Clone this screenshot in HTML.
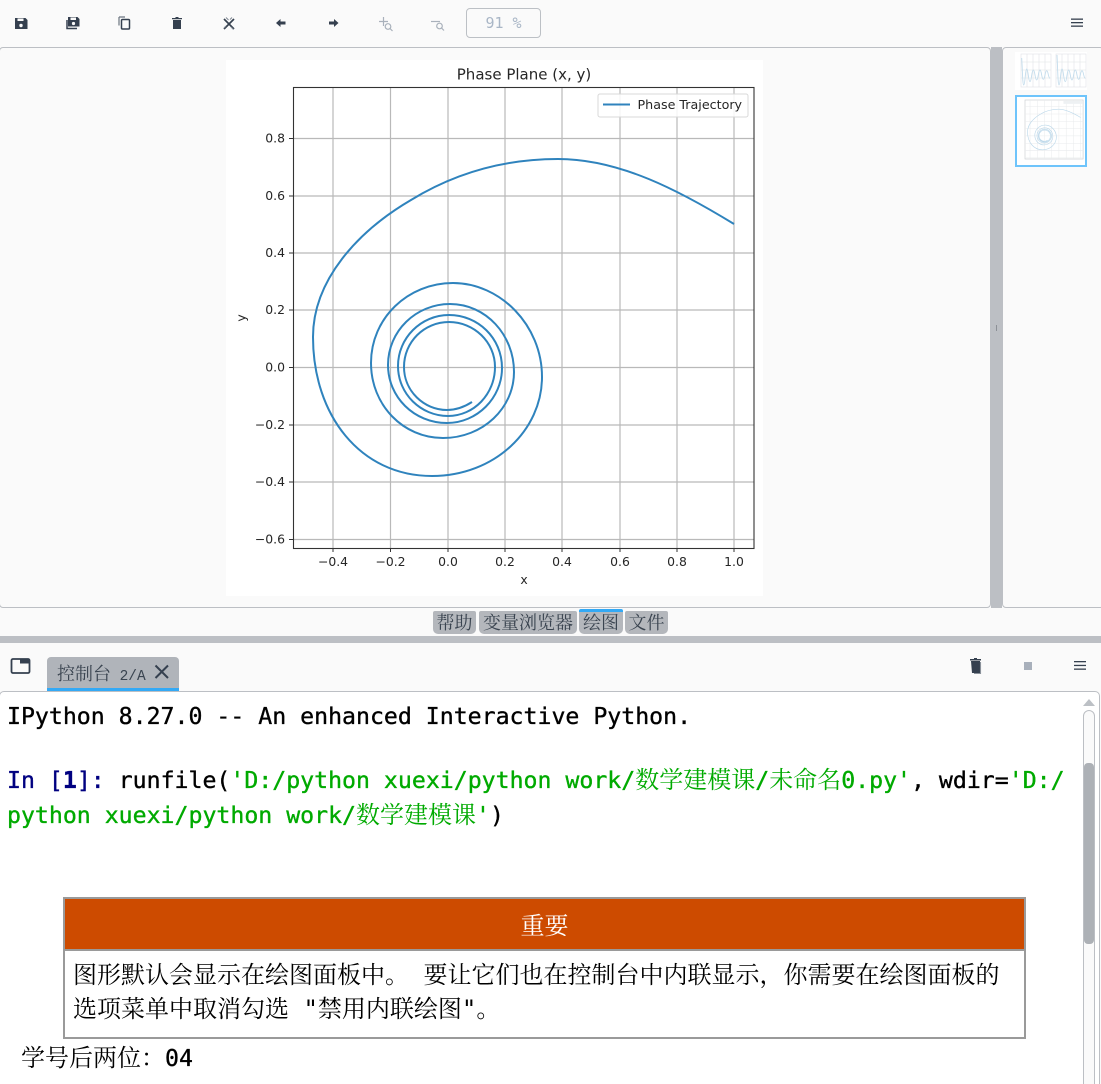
<!DOCTYPE html>
<html><head><meta charset="utf-8">
<style>
html,body{margin:0;padding:0;background:#fafafa;width:1101px;height:1084px;overflow:hidden;}
#w{width:1101px;height:1084px;position:relative;overflow:hidden;font-family:"Liberation Sans","Noto Sans CJK SC",sans-serif;}
.a{position:absolute;}
.plotpane{left:-1px;top:47px;width:992px;height:561px;border:1px solid #bcbfc4;border-radius:4px;box-sizing:border-box;background:#fafafa;}
.thumbpane{left:1002px;top:47px;width:102px;height:561px;border:1px solid #bcbfc4;border-radius:4px;box-sizing:border-box;background:#fafafa;}
.tab{top:611px;height:23px;background:#b4b7bc;border-radius:2px 2px 5px 5px;font:18px/22px "Noto Serif CJK SC",serif;color:#3a4450;text-align:center;white-space:nowrap;}
.con{left:-1px;top:691px;width:1101px;height:400px;background:#fff;border:1px solid #bcbfc4;border-radius:5px;box-sizing:border-box;}
.m{position:absolute;left:7px;white-space:pre;font:23.2px/35px "DejaVu Sans Mono",monospace;color:#000;-webkit-text-stroke:.35px currentColor;}
.c{font-family:"Noto Serif CJK SC",serif;font-size:24px;-webkit-text-stroke:0;}
.g{color:#00aa00}
</style></head><body><div id="w">

<svg class="a" style="left:0;top:0" width="560" height="46" fill="#35404f">
<path d="M15 18h10.500l2 2v9h-12.500z"/><rect x="17.500" y="18.500" width="6" height="2.500" fill="#fafafa"/><circle cx="21" cy="25.500" r="1.700" fill="#fafafa"/>
<path d="M68 17h9.500l2 2v7.500h-11.500z"/><rect x="70.500" y="17.500" width="5.500" height="2.500" fill="#fafafa"/><circle cx="73.500" cy="23.500" r="1.600" fill="#fafafa"/><path d="M67 20v8.500h10" fill="none" stroke="#35404f" stroke-width="1.500"/>
<path d="M119 17v8.500M119 17h6" fill="none" stroke="#6b7480" stroke-width="1.200"/><rect x="121.500" y="19.500" width="8" height="9.500" fill="none" stroke="#35404f" stroke-width="1.500" rx="1"/>
<path d="M173 20h8v9h-8z"/><path d="M172 18h10v1.200H172zM175.500 17h3v1h-3z"/>
<path d="M224 19l10 10M234 19l-10 10" stroke="#35404f" stroke-width="1.700" fill="none"/><path d="M226 17.500l2.500 2.500M231 27l2.500 2.500M232 17.500l-2 2M224 28l2-2" stroke="#7f8792" stroke-width="1" fill="none"/>
<path d="M276 23l4.500-4v2.500h5v3h-5v2.500z"/>
<path d="M338.500 23l-4.500-4v2.500h-5v3h5v2.500z"/>
<g stroke="#a9b1bb" fill="none" stroke-width="1.200">
<path d="M379 21.500h9M383.500 17v9"/><circle cx="388" cy="26.500" r="2.800"/><path d="M390 28.500l2.500 2.500"/>
<path d="M431 21.500h9"/><circle cx="439.500" cy="26" r="2.800"/><path d="M441.500 28l2.500 2.500"/></g>
</svg>
<div class="a" style="left:466px;top:8px;width:75px;height:30px;border:1px solid #bcc0c5;border-radius:4px;box-sizing:border-box;font:15px/29px 'DejaVu Sans Mono',monospace;color:#a9b6c6;text-align:center;">91 %</div>
<svg class="a" style="left:1070px;top:17px" width="14" height="12" fill="#35404f"><rect x="1" y="1.500" width="12" height="1.300"/><rect x="1" y="5" width="12" height="1.300"/><rect x="1" y="8.500" width="12" height="1.300"/></svg>

<div class="a plotpane"></div>
<div class="a" style="left:991px;top:47px;width:11px;height:561px;background:#bcbfc4;"></div>
<div class="a" style="left:996px;top:325px;width:1px;height:6px;background:#8c9096;"></div>
<div class="a thumbpane"></div>

<svg class="a" style="left:226px;top:60px;filter:blur(.25px)" width="537" height="536" viewBox="226 60 537 536" font-family="DejaVu Sans,sans-serif" font-size="12.400" fill="#262626">
<rect x="226" y="60" width="537" height="536" fill="#fff"/>
<g stroke="#b9b9b9" stroke-width="1.200">
<path d="M333 87V548M390.500 87V548M448 87V548M505 87V548M562 87V548M620 87V548M677 87V548M734 87V548"/>
<path d="M293 138.500H754M293 196H754M293 253H754M293 310H754M293 367.500H754M293 425H754M293 482H754M293 539.500H754"/>
</g>
<path d="M734,224 C680,191 620,159 558,159 C510,159 460,170 411,200 C358,231 313,280 313,337 C313,415 360,476 432,476 C495,476 542,430 542,377 C542,325 500,283 453,283 C408,283 371,318 371,363 C371,405 403,438 443,438 C483,438 514,408 514,372 C514,335 486,304 450,304 C416,304 388,331 388,365 C388,397 414,423 447,423 C477,423 502,398 502,368 C502,338 478,315 449,315 C421,315 398,338 398,366 C398,394 421,416 448,416 C474,416 495,394 495,367 C495,342 474,322 449,322 C424,322 404,342 404,367 C404,391 424,410 447,410 C456,410 465,406.500 472,402" fill="none" stroke="#2f83bd" stroke-width="2"/>
<rect x="293.500" y="87.500" width="460.500" height="461" fill="none" stroke="#333" stroke-width="1.100"/>
<g stroke="#333" stroke-width="1">
<path d="M333 548v4M390.500 548v4M448 548v4M505 548v4M562 548v4M620 548v4M677 548v4M734 548v4"/>
<path d="M289 138.500h4M289 196h4M289 253h4M289 310h4M289 367.500h4M289 425h4M289 482h4M289 539.500h4"/>
</g>
<g text-anchor="middle">
<text x="333" y="566">−0.4</text><text x="390.500" y="566">−0.2</text><text x="448" y="566">0.0</text><text x="505" y="566">0.2</text><text x="562" y="566">0.4</text><text x="620" y="566">0.6</text><text x="677" y="566">0.8</text><text x="734" y="566">1.0</text>
<text x="524" y="584">x</text>
<text x="524" y="79.500" font-size="15">Phase Plane (x, y)</text>
</g>
<g text-anchor="end">
<text x="285" y="142.500">0.8</text><text x="285" y="200">0.6</text><text x="285" y="257">0.4</text><text x="285" y="314">0.2</text><text x="285" y="371.500">0.0</text><text x="285" y="429">−0.2</text><text x="285" y="486">−0.4</text><text x="285" y="543.500">−0.6</text>
</g>
<text x="0" y="0" transform="translate(245.500 318) rotate(-90)" text-anchor="middle">y</text>
<rect x="598" y="94" width="150" height="23" rx="2" fill="#fff" fill-opacity=".85" stroke="#d8d8d8"/>
<path d="M603 104.500h27" stroke="#2f83bd" stroke-width="2"/>
<text x="637.500" y="109" font-size="12.700">Phase Trajectory</text>
</svg>

<svg class="a" style="left:1015px;top:52px;filter:blur(.2px)" width="73" height="116">
<rect x="0" y="0" width="72" height="38" fill="#fff"/>
<g fill="none" stroke="#dfe3e6" stroke-width=".6"><rect x="6" y="2" width="30" height="33"/><rect x="41" y="2" width="30" height="33"/><path d="M12 2v33M18 2v33M24 2v33M30 2v33M47 2v33M53 2v33M59 2v33M65 2v33M6 10h30M6 18h30M6 26h30M41 10h30M41 18h30M41 26h30"/></g>
<path id="t1" d="M6.700 6C7.500 20 7.700 33 8.700 33C10.200 33 10.200 17 11.700 17C13.300 17 13.300 29.700 15 29.700C16.600 29.700 16.600 18 18.300 18C20 18 20 28 21.700 28C23.300 28 23.300 18 25 18C26.600 18 26.600 27.300 28.300 27.300C30 27.300 30 18.700 31.700 18.700C33.300 18.700 33.300 26.300 35 26.300" fill="none" stroke="#c3dcec" stroke-width=".9"/>
<path d="M42 3C42.800 20 43 33 44 33C45.500 33 45.500 17 47 17C48.600 17 48.600 29.700 50.300 29.700C51.900 29.700 51.900 18 53.600 18C55.300 18 55.300 28 57 28C58.600 28 58.600 18 60.300 18C61.900 18 61.900 27.300 63.600 27.300C65.300 27.300 65.300 18.700 67 18.700C68.600 18.700 68.600 26.300 70.300 26.300" fill="none" stroke="#c3dcec" stroke-width=".9"/>
<rect x="1" y="44" width="70" height="70" fill="#fff" stroke="#6ec4fb" stroke-width="2"/>
<g transform="translate(10 48) scale(.126 .128) translate(-293 -87)">
<rect x="293" y="87" width="461" height="461" fill="none" stroke="#c9cdd0" stroke-width="5"/>
<path d="M333 87V548M390.500 87V548M448 87V548M505 87V548M562 87V548M620 87V548M677 87V548M734 87V548M293 138.500H754M293 196H754M293 253H754M293 310H754M293 367.500H754M293 425H754M293 482H754M293 539.500H754" stroke="#e9ebed" stroke-width="4"/>
<rect x="598" y="94" width="150" height="23" fill="#eef1f3"/>
<path d="M734,224 C680,191 620,159 558,159 C510,159 460,170 411,200 C358,231 313,280 313,337 C313,415 360,476 432,476 C495,476 542,430 542,377 C542,325 500,283 453,283 C408,283 371,318 371,363 C371,405 403,438 443,438 C483,438 514,408 514,372 C514,335 486,304 450,304 C416,304 388,331 388,365 C388,397 414,423 447,423 C477,423 502,398 502,368 C502,338 478,315 449,315 C421,315 398,338 398,366 C398,394 421,416 448,416 C474,416 495,394 495,367 C495,342 474,322 449,322 C424,322 404,342 404,367 C404,391 424,410 447,410 C456,410 465,406.500 472,402" fill="none" stroke="#bcd8ea" stroke-width="5"/>
</g>
</svg>

<div class="a tab" style="left:433px;width:43px;">帮助</div>
<div class="a tab" style="left:479px;width:98px;">变量浏览器</div>
<div class="a tab" style="left:579px;width:44px;top:609px;height:25px;line-height:21px;border-top:3px solid #33a9f5;box-sizing:border-box;">绘图</div>
<div class="a tab" style="left:625px;width:43px;">文件</div>

<div class="a" style="left:0;top:636px;width:1101px;height:7px;background:#bcbfc4;"></div>

<svg class="a" style="left:10px;top:657px" width="22" height="19"><rect x="1.500" y="2" width="18" height="14" rx="1.500" fill="none" stroke="#35404f" stroke-width="1.800"/><rect x="10" y="2" width="9.500" height="4.500" fill="#35404f"/></svg>
<div class="a" style="left:47px;top:657px;width:132px;height:34px;background:#b0b4ba;border-radius:4px 4px 0 0;border-bottom:3px solid #33a9f5;box-sizing:border-box;font:18px/32px 'Noto Serif CJK SC',serif;color:#3a4450;padding-left:10px;white-space:pre;">控制台 <span style="font:14.500px 'Liberation Mono',monospace;margin-left:4px;">2/A</span></div>
<svg class="a" style="left:153px;top:663px" width="18" height="18"><path d="M2.500 2.500L15 15M15 2.500L2.500 15" stroke="#35404f" stroke-width="2"/></svg>

<svg class="a" style="left:966px;top:655px" width="20" height="22" fill="#35404f"><path d="M5 6h9v12H6z"/><path d="M4 4h11v1.500H4zM8 3h3v1H8z"/><path d="M14.500 7v11.500H8" fill="none" stroke="#8a919a" stroke-width="1.100"/></svg>
<div class="a" style="left:1024px;top:662px;width:8px;height:8px;background:#a8b0bb;"></div>
<svg class="a" style="left:1073px;top:660px" width="14" height="12" fill="#35404f"><rect x="1" y="1" width="12" height="1.300"/><rect x="1" y="4.800" width="12" height="1.300"/><rect x="1" y="8.500" width="12" height="1.300"/></svg>

<div class="a con"></div>
<div class="a" style="left:1083px;top:699px;width:0;height:0;border:6px solid transparent;border-top:0;border-bottom:7px solid #bcc0c5;"></div>
<div class="a" style="left:1083px;top:710px;width:12px;height:390px;border:1px solid #bcbfc4;border-radius:6px;box-sizing:border-box;background:#fafafa;"></div>
<div class="a" style="left:1084px;top:763px;width:10px;height:181px;background:#adb1b6;border-radius:4px;"></div>

<div class="m" style="top:699px;">IPython 8.27.0 -- An enhanced Interactive Python.</div>
<div class="m" style="top:760px;"><span style="color:#000080">In [<b>1</b>]:</span> runfile(<span class="g">'D:/python xuexi/python work/<span class="c">数学建模课</span>/<span class="c">未命名</span>0.py'</span>, wdir=<span class="g">'D:/</span></div>
<div class="m g" style="top:795px;">python xuexi/python work/<span class="c">数学建模课</span>'<span style="color:#000">)</span></div>

<div class="a" style="left:63px;top:897px;width:963px;height:142px;background:#fff;border:2px solid #9a9a9a;box-sizing:border-box;">
<div style="height:50px;background:#cd4b00;border-bottom:2px solid #9a9a9a;color:#fff;font:24px/50px 'Noto Serif CJK SC',serif;text-align:center;">重要</div>
<div style="position:absolute;left:8px;top:59px;width:945px;font:24px/34px 'DejaVu Sans Mono','Noto Serif CJK SC',serif;color:#000;white-space:pre;">图形默认会显示在绘图面板中。 要让它们也在控制台中内联显示，你需要在绘图面板的
选项菜单中取消勾选 "禁用内联绘图"。</div>
</div>

<div class="a" style="left:21px;top:1038px;white-space:pre;font:24px/35px 'Noto Serif CJK SC',serif;color:#000;">学号后两位：<span style="font-family:'DejaVu Sans Mono',monospace;font-size:23.200px;-webkit-text-stroke:.35px #000;">04</span></div>

</div></body></html>
